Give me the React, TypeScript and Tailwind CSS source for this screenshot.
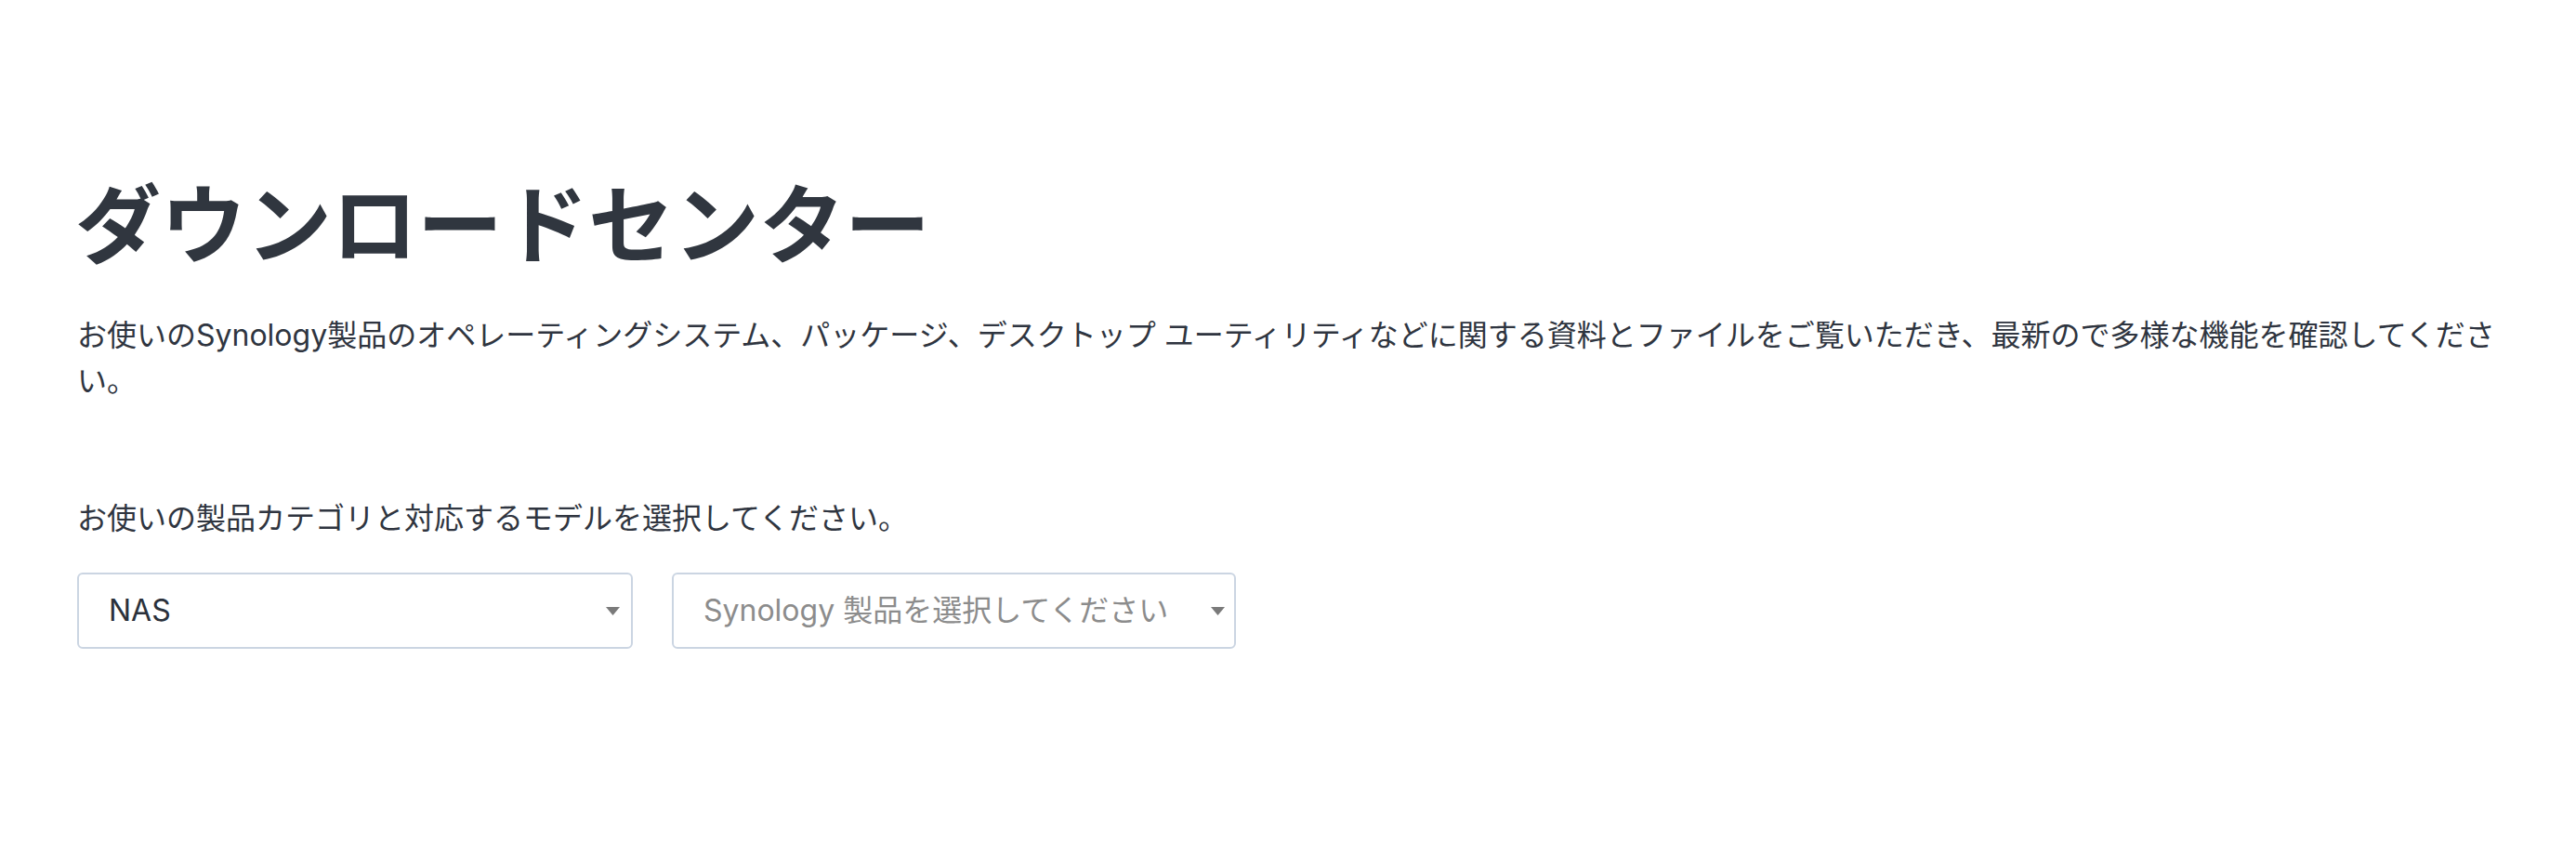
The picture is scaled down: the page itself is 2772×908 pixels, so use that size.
import React from "react";

const font = { fontFamily: "Inter, 'Noto Sans CJK JP', sans-serif" };

function Caret() {
  return (
    <svg width="15" height="9" viewBox="0 0 15 9" className="shrink-0">
      <path d="M0 0 L15 0 L7.5 9 Z" fill="#7a7a7a" />
    </svg>
  );
}

export default function App() {
  return (
    <div
      className="min-h-[908px] w-full bg-white text-[#2f3540] font-['Inter','Noto_Sans_CJK_JP',sans-serif]"
      style={font}
    >
      <div className="pl-[83px] pr-[82px] pt-[188px]">
        <h1 className="text-[92px] leading-[110px] font-bold text-[#30363f] -ml-[2px]">
          ダウンロードセンター
        </h1>
        <p className="mt-[38px] text-[32px] leading-[49px]">
          お使いのSynology製品のオペレーティングシステム、パッケージ、デスクトップ ユーティリティなどに関する資料とファイルをご覧いただき、最新ので多様な機能を確認してください。
        </p>
        <p className="mt-[98px] text-[32px] leading-[51px]">
          お使いの製品カテゴリと対応するモデルを選択してください。
        </p>
        <div className="mt-[33px] flex gap-[42px]">
          <div className="flex h-[82px] w-[598px] items-center justify-between rounded-[6px] border-2 border-[#cbd5e2] pl-[32px] pr-[12px]">
            <span className="text-[32px] text-[#2b313b]">NAS</span>
            <Caret />
          </div>
          <div className="flex h-[82px] w-[607px] items-center justify-between rounded-[6px] border-2 border-[#cbd5e2] pl-[32px] pr-[10px]">
            <span className="text-[32px] text-[#8c8c8c]">Synology 製品を選択してください</span>
            <Caret />
          </div>
        </div>
      </div>
    </div>
  );
}
